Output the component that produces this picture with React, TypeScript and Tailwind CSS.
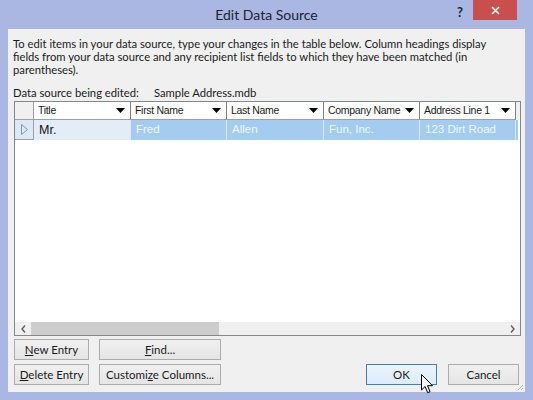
import type { ReactNode } from "react";

// column layout of the grid, widths in px
const COLUMNS: { name: string; width: number }[] = [
  { name: "Title", width: 97 },
  { name: "First Name", width: 96 },
  { name: "Last Name", width: 97 },
  { name: "Company Name", width: 96 },
  { name: "Address Line 1", width: 96 },
];

const ROW = ["Mr.", "Fred", "Allen", "Fun, Inc.", "123 Dirt Road"];

function DropArrow() {
  return (
    <svg width="9" height="5" viewBox="0 0 9 5" className="shrink-0">
      <path d="M0 0h9L4.5 5z" fill="#000" />
    </svg>
  );
}

function Btn({
  children,
  width,
  primary,
}: {
  children: ReactNode;
  width: number;
  primary?: boolean;
}) {
  const cls = primary
    ? "border-[#3c7fb1] bg-gradient-to-b from-[#ecf4fc] to-[#dcecfc]"
    : "border-[#acacac] bg-gradient-to-b from-[#f0f0f0] to-[#e5e5e5]";
  return (
    <button
      type="button"
      style={{ width }}
      className={`flex h-[21px] items-center justify-center border text-[11.5px] text-[#1a1a1a] ${cls}`}
    >
      {children}
    </button>
  );
}

export default function App() {
  return (
    <div className="relative flex h-[400px] w-[533px] flex-col overflow-hidden bg-[#aab7e2] font-['Lato','Liberation_Sans',sans-serif]">
      {/* title bar */}
      <div className="relative flex h-[29px] shrink-0 items-center justify-center">
        <span className="text-[14px] text-[#23232f]">Edit Data Source</span>
        <span className="absolute left-[457px] top-[3px] text-[13px] font-bold text-[#1f1f2e]">
          ?
        </span>
        <div className="absolute left-[473px] top-0 flex h-[20px] w-[44px] items-center justify-center bg-[#c94f4f]">
          <svg width="9" height="9" viewBox="0 0 9 9">
            <path d="M1 1l7 7M8 1L1 8" stroke="#fff" strokeWidth="1.6" />
          </svg>
        </div>
      </div>

      {/* client area */}
      <div className="relative mx-[8px] mb-[8px] flex flex-1 flex-col bg-[#f0f0f0] pl-[5px] pr-[4px] text-[11.25px] text-[#1a1a1a]">
        <p className="mt-[8px] whitespace-nowrap leading-[13px]">
          To edit items in your data source, type your changes in the table below. Column headings display
          <br />
          fields from your data source and any recipient list fields to which they have been matched (in
          <br />
          parentheses).
        </p>

        <div className="mt-[10px] flex leading-[14px]">
          <span className="w-[141px]">Data source being edited:</span>
          <span>Sample Address.mdb</span>
        </div>

        {/* data grid */}
        <div className="ml-[1px] mt-[1px] flex h-[235px] flex-col border border-[#828790] bg-white font-['Liberation_Sans',sans-serif] text-[10.5px]">
          <div className="flex h-[18px] shrink-0">
            <div className="w-[19px] shrink-0 border-b border-r border-[#a0a0a0] bg-[#f0f0f0]" />
            {COLUMNS.map((c) => (
              <div
                key={c.name}
                style={{ width: c.width }}
                className="flex shrink-0 items-center justify-between border-b border-r border-b-[#a0a0a0] border-r-[#808080] bg-white pl-[4px] pr-[5px]"
              >
                <span className="whitespace-nowrap tracking-[-0.3px]">{c.name}</span>
                <DropArrow />
              </div>
            ))}
            <div className="flex-1 bg-[#f0f0f0]" />
          </div>

          <div className="flex h-[20px] shrink-0">
            <div className="flex w-[19px] shrink-0 items-center justify-center border-b border-r border-[#a0a0a0] bg-[#dce8f6]">
              <svg width="7" height="11" viewBox="0 0 7 11">
                <path d="M0.5 0.5v10l6-5z" fill="none" stroke="#7f93b4" />
              </svg>
            </div>
            {ROW.map((v, i) => (
              <div
                key={v}
                style={{ width: COLUMNS[i].width }}
                className={`flex shrink-0 items-center border-r border-[#e0e8f2] pl-[5px] ${
                  i === 0
                    ? "bg-[#e3edf8] text-[12.5px] text-[#111]"
                    : "bg-[#a4ccf0] text-[11.5px] text-[#eef6ff]"
                }`}
              >
                {v}
              </div>
            ))}
            <div className="w-[2px] bg-[#a4ccf0]" />
          </div>

          <div className="flex-1" />

          {/* horizontal scrollbar */}
          <div className="flex h-[13px] shrink-0 items-center bg-[#f0f0f0]">
            <div className="flex w-[16px] items-center justify-center">
              <svg width="5" height="8" viewBox="0 0 5 8">
                <path d="M4 0.5L1 4l3 3.5" fill="none" stroke="#606060" strokeWidth="1.4" />
              </svg>
            </div>
            <div className="h-[13px] w-[188px] bg-[#cdcdcd]" />
            <div className="flex-1" />
            <div className="flex w-[16px] items-center justify-center">
              <svg width="5" height="8" viewBox="0 0 5 8">
                <path d="M1 0.5L4 4l-3 3.5" fill="none" stroke="#606060" strokeWidth="1.4" />
              </svg>
            </div>
          </div>
        </div>

        {/* buttons */}
        <div className="ml-[1px] mt-[3px] flex items-end">
          <div className="grid grid-cols-[75px_122px] gap-x-[10px] gap-y-[4px]">
            <Btn width={75}>
              <span>
                <u>N</u>ew Entry
              </span>
            </Btn>
            <Btn width={122}>
              <span>
                <u>F</u>ind...
              </span>
            </Btn>
            <Btn width={75}>
              <span>
                <u>D</u>elete Entry
              </span>
            </Btn>
            <Btn width={122}>
              <span>
                Customi<u>z</u>e Columns...
              </span>
            </Btn>
          </div>
          <div className="ml-auto flex gap-[11px] pr-[2px]">
            <Btn width={71} primary>
              OK
            </Btn>
            <Btn width={71}>Cancel</Btn>
          </div>
        </div>

        {/* size grip */}
        <svg width="7" height="7" viewBox="0 0 7 7" className="absolute bottom-[1px] right-[1px]">
          <path d="M6 1L1 6M6 4L4 6" stroke="#b0b0b0" />
        </svg>
      </div>

      {/* mouse pointer over OK */}
      <svg
        width="13"
        height="20"
        viewBox="0 0 13 20"
        className="absolute left-[421px] top-[374px]"
      >
        <path
          d="M0.5 0.5v15.5l3.6-3.5 2.6 6.2 2.4-1-2.6-6h5z"
          fill="#fff"
          stroke="#000"
          strokeLinejoin="round"
        />
      </svg>
    </div>
  );
}
